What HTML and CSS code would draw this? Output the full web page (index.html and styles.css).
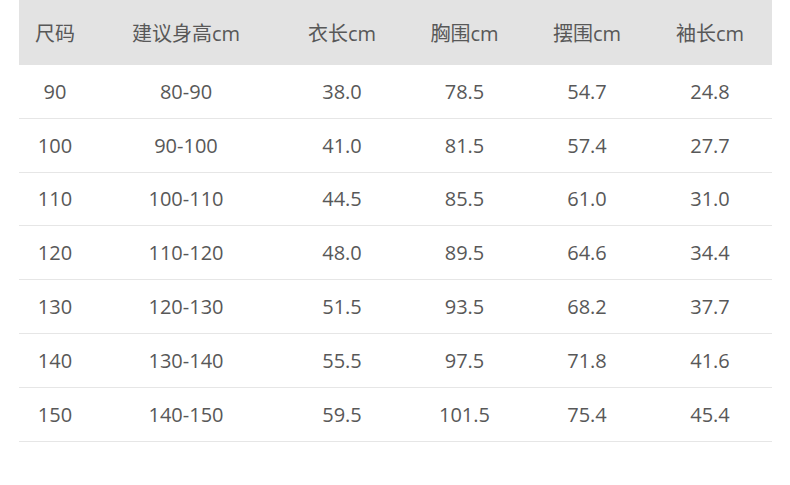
FILE: index.html
```html
<!DOCTYPE html>
<html lang="zh">
<head>
<meta charset="utf-8">
<link rel="stylesheet" href="styles.css">
</head>
<body>
<div class="size-table">
  <div class="row head">
    <div>尺码</div><div>建议身高cm</div><div>衣长cm</div><div>胸围cm</div><div>摆围cm</div><div>袖长cm</div>
  </div>
  <div class="row"><div>90</div><div>80-90</div><div>38.0</div><div>78.5</div><div>54.7</div><div>24.8</div></div>
  <div class="row"><div>100</div><div>90-100</div><div>41.0</div><div>81.5</div><div>57.4</div><div>27.7</div></div>
  <div class="row"><div>110</div><div>100-110</div><div>44.5</div><div>85.5</div><div>61.0</div><div>31.0</div></div>
  <div class="row"><div>120</div><div>110-120</div><div>48.0</div><div>89.5</div><div>64.6</div><div>34.4</div></div>
  <div class="row"><div>130</div><div>120-130</div><div>51.5</div><div>93.5</div><div>68.2</div><div>37.7</div></div>
  <div class="row"><div>140</div><div>130-140</div><div>55.5</div><div>97.5</div><div>71.8</div><div>41.6</div></div>
  <div class="row"><div>150</div><div>140-150</div><div>59.5</div><div>101.5</div><div>75.4</div><div>45.4</div></div>
</div>
</body>
</html>
```
FILE: styles.css
```css
html, body {
  margin: 0;
  padding: 0;
  background: #ffffff;
}
body {
  font-family: "Open Sans", "Noto Sans CJK SC", sans-serif;
  font-size: 20px;
  color: #585858;
}
.size-table {
  margin-left: 19px;
  width: 753px;
}
.row {
  display: grid;
  grid-template-columns: 72px 190px 122px 123px 122px 124px;
  align-items: center;
  height: 53.8px;
  box-sizing: border-box;
  border-bottom: 1px solid #e6e6e6;
}
.row > div {
  text-align: center;
}
.row.head {
  height: 65px;
  background: #e3e3e3;
  border-bottom: none;
}
```
